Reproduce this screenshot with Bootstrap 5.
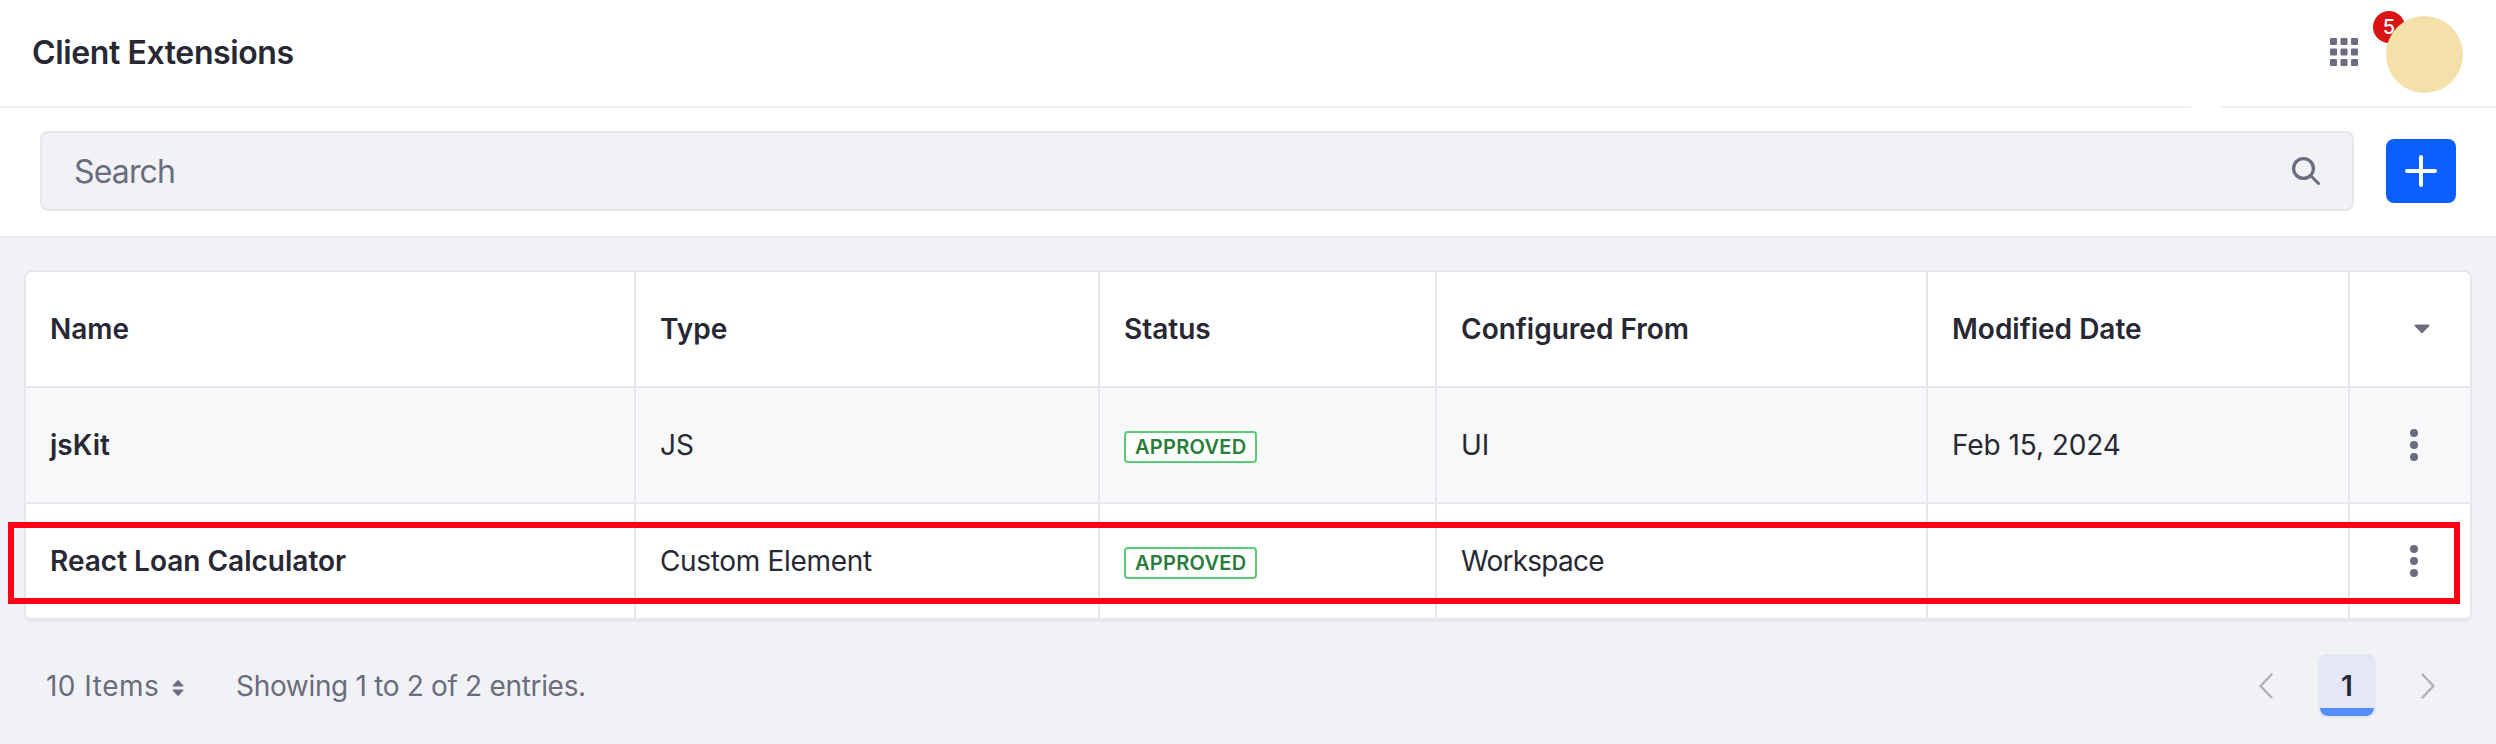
<!DOCTYPE html>
<html lang="en">
<head>
<meta charset="utf-8">
<meta name="viewport" content="width=device-width, initial-scale=1">
<title>Client Extensions</title>
<link href="https://cdn.jsdelivr.net/npm/bootstrap@5.3.0/dist/css/bootstrap.min.css" rel="stylesheet">
<style>
  body { font-family: Inter, "Liberation Sans", sans-serif; font-size: 28px; line-height: 42px; color: #272833; background: #f1f2f5; }
  svg { display: block; }
  .app-header { height: 108px; padding: 0 33px 0 32px; border-bottom: 2px solid #f0f1f4; }
  .app-title { font-size: 32px; font-weight: 600; line-height: 48px; letter-spacing: -.39px; }
  .header-notch { width: 30px; height: 2px; right: 275px; bottom: -2px; }
  .apps-icon { margin: 0 28px 2px 0; }
  .avatar { width: 77px; height: 77px; background: #f3e1a9; margin-top: 3px; }
  .alerts { width: 32px; height: 32px; left: -13px; top: -2px; background: #da1414; color: #fff; font-size: 20px; line-height: 32px; font-weight: 500; }
  .toolbar { height: 130px; padding: 23px 40px 25px; border-bottom: 2px solid #e7e7ed; }
  .search-box { height: 80px; margin-right: 32px; border: 2px solid #e7e7ed; border-radius: 8px; background: #f1f2f5; padding: 0 32px; }
  .search-box input, .search-box input:focus { font-size: 32px; color: #272833; line-height: 48px; padding: 1px 0 0; letter-spacing: -.85px; }
  .search-box input::placeholder { color: #6b6c7e; opacity: 1; }
  .btn-add { width: 70px; height: 64px; border-radius: 8px; background: #0b5fff; padding: 0; }
  .table-area { margin: 32px 24px 0; }
  .table-frame { border: 2px solid #e7e7ed; border-bottom-width: 4px; border-radius: 8px; overflow: hidden; background: #fff; }
  .ext-table { table-layout: fixed; width: 2444px; border-collapse: separate; border-spacing: 0; color: #272833; }
  .ext-table > :not(caption) > * > * { height: 116px; padding: 0 24px; vertical-align: middle; border-width: 0 0 2px; border-style: solid; border-color: #e7e7ed; color: #272833; }
  .ext-table > tbody > tr:last-child > * { border-bottom-width: 0; height: 114px; }
  .ext-table > :not(caption) > * > * + * { border-left-width: 2px; }
  .ext-table th { font-weight: 600; }
  .ext-table > tbody > .row-tint > * { background: #f7f8f9; }
  .ls-element { letter-spacing: -.33px; }
  .ls-workspace { letter-spacing: -.75px; }
  .ls-date { letter-spacing: -.08px; }
  .status-tag { width: 133px; height: 32px; margin-top: 4px; border: 2px solid #5aca75; border-radius: 4px; background: #fff; color: #287d3c; font-size: 20px; line-height: 28px; font-weight: 600; letter-spacing: .3px; padding-left: 9px; }
  .col-caret { margin-right: 16px; }
  .row-menu { margin-left: 36px; }
  .highlight { left: -16px; right: 12px; top: 252px; height: 82px; border: 6px solid #ff0016; }
  .pager { height: 64px; margin: 32px 61px 0 46px; color: #6b6c7e; }
  .page-size { width: 126px; letter-spacing: .48px; }
  .page-sort { margin-right: 52px; }
  .page-info { letter-spacing: -.32px; }
  .page-now { width: 58px; height: 64px; margin: 0 45px; border-radius: 8px; background: #e4e8f6; color: #272833; font-weight: 600; line-height: 64px; }
  .page-bar { left: 2px; right: 2px; bottom: 2px; height: 8px; border-radius: 0 0 8px 8px; background: #528eff; }
</style>
</head>
<body>
<header class="app-header bg-white d-flex align-items-center justify-content-between position-relative">
  <h1 class="app-title mb-0">Client Extensions</h1>
  <div class="d-flex align-items-center">
    <svg class="apps-icon" width="28" height="28" viewBox="0 0 28 28" fill="#6b6c7e">
      <rect width="7" height="7" rx="1"/><rect x="10.5" width="7" height="7" rx="1"/><rect x="21" width="7" height="7" rx="1"/>
      <rect y="10.5" width="7" height="7" rx="1"/><rect x="10.5" y="10.5" width="7" height="7" rx="1"/><rect x="21" y="10.5" width="7" height="7" rx="1"/>
      <rect y="21" width="7" height="7" rx="1"/><rect x="10.5" y="21" width="7" height="7" rx="1"/><rect x="21" y="21" width="7" height="7" rx="1"/>
    </svg>
    <div class="position-relative">
      <span class="alerts position-absolute rounded-circle text-center">5</span>
      <div class="avatar rounded-circle position-relative"></div>
    </div>
  </div>
  <span class="header-notch bg-white position-absolute"></span>
</header>

<section class="toolbar bg-white d-flex align-items-center">
  <div class="search-box d-flex align-items-center flex-grow-1">
    <input class="form-control border-0 bg-transparent shadow-none" type="text" placeholder="Search" aria-label="Search">
    <svg class="flex-shrink-0" width="28" height="28" viewBox="0 0 28 28" fill="none" stroke="#6b6c7e">
      <circle cx="11.5" cy="11.5" r="9.9" stroke-width="3.2"/><path d="M18.500 18.500 26.500 26.500" stroke-width="3" stroke-linecap="round"/>
    </svg>
  </div>
  <button class="btn btn-add border-0 d-flex align-items-center justify-content-center flex-shrink-0" type="button" aria-label="Add">
    <svg width="32" height="32" viewBox="0 0 32 32" stroke="#fff" stroke-width="4" stroke-linecap="round"><path d="M16 2v28M2 16h28"/></svg>
  </button>
</section>

<main class="table-area position-relative">
  <div class="table-frame">
    <table class="table ext-table mb-0">
      <colgroup><col style="width:608px"><col style="width:464px"><col style="width:337px"><col style="width:491px"><col style="width:422px"><col style="width:122px"></colgroup>
      <thead>
        <tr>
          <th>Name</th><th>Type</th><th>Status</th><th>Configured From</th><th>Modified Date</th>
          <th><svg class="col-caret ms-auto" width="16" height="10" viewBox="0 0 16 10" fill="#6b6c7e"><path d="M1.600.5h12.800c1 0 1.400 1 .7 1.700L9 8.500a1.400 1.400 0 0 1-2 0L.9 2.200C.2 1.500.6.5 1.600.5z"/></svg></th>
        </tr>
      </thead>
      <tbody>
        <tr class="row-tint">
          <th>jsKit</th><td>JS</td><td><span class="status-tag d-block">APPROVED</span></td><td>UI</td><td class="ls-date">Feb 15, 2024</td>
          <td><svg class="row-menu" width="8" height="32" viewBox="0 0 8 32" fill="#6b6c7e"><circle cx="4" cy="4" r="4"/><circle cx="4" cy="16" r="4"/><circle cx="4" cy="28" r="4"/></svg></td>
        </tr>
        <tr>
          <th>React Loan Calculator</th><td class="ls-element">Custom Element</td><td><span class="status-tag d-block">APPROVED</span></td><td class="ls-workspace">Workspace</td><td></td>
          <td><svg class="row-menu" width="8" height="32" viewBox="0 0 8 32" fill="#6b6c7e"><circle cx="4" cy="4" r="4"/><circle cx="4" cy="16" r="4"/><circle cx="4" cy="28" r="4"/></svg></td>
        </tr>
      </tbody>
    </table>
  </div>
  <div class="highlight position-absolute"></div>
</main>

<footer class="pager d-flex align-items-center text-nowrap">
  <span class="page-size">10 Items</span>
  <svg class="page-sort mt-1" width="12" height="16" viewBox="0 0 12 16" fill="#6b6c7e"><path d="M1.200 6.500h9.600c.7 0 1-.6.5-1.100L6.700.4a1 1 0 0 0-1.400 0L.7 5.400c-.5.5-.2 1.100.5 1.100zM1.200 9.500h9.600c.7 0 1 .6.5 1.100l-4.600 5a1 1 0 0 1-1.400 0l-4.600-5c-.5-.5-.2-1.100.5-1.100z"/></svg>
  <span class="page-info">Showing 1 to 2 of 2 entries.</span>
  <svg class="ms-auto" width="14" height="26" viewBox="0 0 14 26" fill="none" stroke="#b0b0bd" stroke-width="2.400" stroke-linecap="round" stroke-linejoin="round"><path d="M12.500 1.500 1.500 13l11 11.500"/></svg>
  <div class="page-now position-relative text-center">1<span class="page-bar position-absolute"></span></div>
  <svg width="14" height="26" viewBox="0 0 14 26" fill="none" stroke="#b0b0bd" stroke-width="2.400" stroke-linecap="round" stroke-linejoin="round"><path d="M1.500 1.500 12.500 13l-11 11.500"/></svg>
</footer>
<script src="https://cdn.jsdelivr.net/npm/bootstrap@5.3.0/dist/js/bootstrap.bundle.min.js"></script>
</body>
</html>
